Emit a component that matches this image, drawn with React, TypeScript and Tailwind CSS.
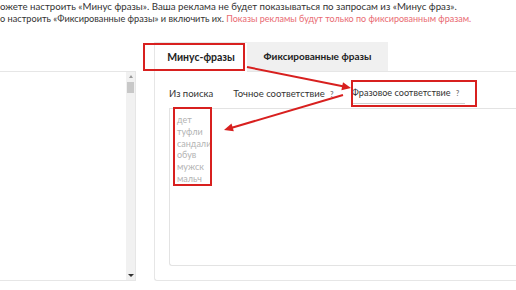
import { ReactNode } from 'react';

const Hint = () => (
  <span className="ml-[4px] inline-flex h-[10px] w-[6px] items-center justify-center text-[7px] font-bold text-[#777]">?</span>
);

const SubTab = ({ children, active, className }: { children: ReactNode; active?: boolean; className?: string }) => (
  <div className={`shrink-0 whitespace-nowrap pb-[4px] ${active ? 'border-b border-[#cfcfcf] pr-[4px]' : ''} ${className ?? ''}`}>
    {children}
  </div>
);

const words = ['дет', 'туфли', 'сандали', 'обув', 'мужск', 'мальч'];

export default function App() {
  return (
    <div className="relative h-[290px] w-[516px] overflow-hidden bg-white font-['Lato','Noto_Sans',sans-serif] text-[#333]">
      <div className="whitespace-nowrap pt-[1px] leading-[11.5px]">
        <p className="text-[9.7px]">ожете настроить «Минус фразы». Ваша реклама не будет показываться по запросам из «Минус фраз».</p>
        <p className="text-[9.2px]">
          о настроить «Фиксированные фразы» и включить их.{' '}
          <span className="text-[9px] text-[#e96a72]">Показы рекламы будут только по фиксированным фразам.</span>
        </p>
      </div>

      <div className="mt-[18px] flex items-start">
        {/* left list */}
        <div className="mt-[29px] flex h-[210px] w-[136px] shrink-0 justify-end border-y border-r border-[#e6e6e6]">
          <div className="flex w-[9px] flex-col items-center bg-[#f1f1f1]">
            <div className="mt-[3px] h-0 w-0 border-x-[2.5px] border-b-[3px] border-x-transparent border-b-[#999]" />
            <div className="mt-[4px] h-[11px] w-[7px] bg-[#c8c8c8]" />
            <div className="mt-auto mb-[3px] h-0 w-0 border-x-[3px] border-t-[3px] border-x-transparent border-t-[#333]" />
          </div>
        </div>

        {/* right panel */}
        <div className="ml-[18px] min-w-0 flex-1">
          <div className="flex h-[29px] items-stretch">
            <div className="relative z-10 -mb-px flex w-[93px] shrink-0 items-center justify-center border-l border-t border-[#e6e6e6] bg-white text-[10.5px] font-bold text-[#222]">
              Минус-фразы
            </div>
            <div className="flex w-[141px] shrink-0 items-center justify-center bg-[#f0f0f0] text-[10px] font-bold text-[#222]">
              Фиксированные фразы
            </div>
          </div>
          <div className="flex h-[210px] flex-col rounded-bl-[3px] border-y border-l border-[#e6e6e6] pb-[14px] pl-[14px]">
            <div className="flex items-end pt-[15px] text-[9.5px] leading-[12px] text-[#333]">
              <SubTab className="mr-[20px]">Из поиска</SubTab>
              <SubTab className="mr-[17px]">
                Точное соответствие
                <Hint />
              </SubTab>
              <SubTab active className="text-[9.1px]">
                Фразовое соответствие
                <Hint />
              </SubTab>
            </div>
            <div className="mt-[4px] flex-1 rounded-bl-[3px] border-y border-l border-[#e3e3e3] pl-[7px] pt-[5px] text-[9px] leading-[11.8px] text-[#b3b3b3]">
              {words.map((w) => (
                <div key={w}>{w}</div>
              ))}
            </div>
          </div>
        </div>
      </div>

      {/* annotations */}
      <div className="absolute z-20 left-[143px] top-[43px] h-[28px] w-[102px] border-2 border-[#d8201f]" />
      <div className="absolute z-20 left-[351px] top-[80px] h-[27px] w-[126px] border-2 border-[#d8201f]" />
      <div className="absolute z-20 left-[173px] top-[107px] h-[79px] w-[39px] border-2 border-[#d8201f]" />
      <svg className="pointer-events-none absolute z-20 left-0 top-0" width="516" height="290">
        <line x1="247" y1="67" x2="344" y2="86.5" stroke="#d8201f" strokeWidth="2" />
        <polygon points="351,88 341.4,90.2 343,82.3" fill="#d8201f" />
        <line x1="343" y1="95" x2="231" y2="128" stroke="#d8201f" strokeWidth="2" />
        <polygon points="224,130 231.5,123.6 233.8,131.3" fill="#d8201f" />
      </svg>
    </div>
  );
}
